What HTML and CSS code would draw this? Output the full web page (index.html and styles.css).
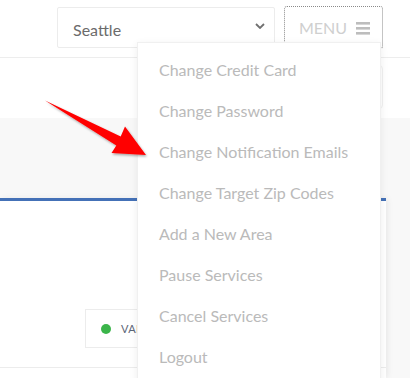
FILE: index.html
```html
<!DOCTYPE html>
<html lang="en">
<head>
<meta charset="utf-8">
<title>Account menu</title>
<link rel="stylesheet" href="styles.css">
</head>
<body>
<header class="topbar">
  <div class="city-select">
    <span class="city-name">Seattle</span>
    <svg class="chevron" width="10" height="6" viewBox="0 0 10 6"><path d="M1 1 L5 5 L9 1" fill="none" stroke="#707070" stroke-width="1.8"/></svg>
  </div>
  <button class="menu-btn">
    <span class="menu-label">MENU</span>
    <svg class="burger" width="14" height="13" viewBox="0 0 14 13"><rect x="0" y="0" width="14" height="2.6" fill="#bdbdbd"/><rect x="0" y="5" width="14" height="2.6" fill="#bdbdbd"/><rect x="0" y="10" width="14" height="2.6" fill="#bdbdbd"/></svg>
  </button>
</header>
<section class="subbar">
  <div class="sub-card"></div>
</section>
<section class="content">
  <div class="band"></div>
  <div class="panel-row">
    <div class="panel">
      <div class="status">
        <span class="dot"></span>
        <span class="status-text">VALID</span>
      </div>
      <div class="row-sep"></div>
    </div>
    <div class="side"></div>
  </div>
</section>

<nav class="dropdown">
  <a class="item">Change Credit Card</a>
  <a class="item">Change Password</a>
  <a class="item">Change Notification Emails</a>
  <a class="item">Change Target Zip Codes</a>
  <a class="item">Add a New Area</a>
  <a class="item">Pause Services</a>
  <a class="item">Cancel Services</a>
  <a class="item">Logout</a>
</nav>

<svg class="arrow" width="160" height="170" viewBox="0 0 160 170">
  <defs>
    <filter id="sh" x="-10%" y="-10%" width="130%" height="130%">
      <feDropShadow dx="1" dy="1.5" stdDeviation="1" flood-color="#000" flood-opacity="0.35"/>
    </filter>
  </defs>
  <polygon points="45,100.5 120.7,136.5 125,126.5 146,155 111.5,153 116.3,145.5" fill="#ff0000" filter="url(#sh)"/>
</svg>
</body>
</html>
```
FILE: styles.css
```css
html, body {
  margin: 0;
  padding: 0;
}
body {
  width: 410px;
  height: 378px;
  overflow: hidden;
  background: #fff;
  font-family: Lato, "Open Sans", sans-serif;
  position: relative;
}
.topbar {
  height: 57px;
  border-bottom: 1px solid #ededed;
  display: flex;
  align-items: flex-start;
  justify-content: flex-end;
  gap: 9px;
  padding-right: 27px;
}
.city-select {
  margin-top: 7px;
  width: 218px;
  height: 41px;
  box-sizing: border-box;
  border: 1px solid #ececec;
  border-radius: 2px;
  display: flex;
  align-items: center;
  padding: 4px 9px 0 15px;
}
.city-name {
  flex: 1;
  font-size: 16px;
  color: #6b6b6b;
}
.chevron {
  margin-top: -7px;
}
.menu-btn {
  margin-top: 6px;
  width: 99px;
  height: 43px;
  box-sizing: border-box;
  border: 1px dotted #8a8a8a;
  border-radius: 3px;
  background: #fff;
  display: flex;
  align-items: center;
  padding: 0 0 0 14px;
  gap: 9px;
  font-family: Lato, "Open Sans", sans-serif;
}
.menu-label {
  font-size: 16px;
  color: #cfcfcf;
}
.burger {
  margin-top: 1px;
}
.subbar {
  height: 60px;
  box-sizing: border-box;
  padding-top: 7px;
  display: flow-root;
}
.sub-card {
  margin: 0 27px 0 auto;
  width: 200px;
  height: 42px;
  border: 1px solid #f0f0f0;
  border-radius: 4px;
}
.content {
  background: #f8f8f8;
  height: 260px;
}
.band {
  height: 80px;
}
.panel-row {
  display: flex;
  height: 180px;
}
.panel {
  width: 386px;
  background: #fff;
  border-top: 3px solid #4471b7;
  box-shadow: 2px 0 6px rgba(0, 0, 0, 0.06);
  display: flex;
  flex-direction: column;
}
.side {
  flex: 1;
}
.status {
  margin: 108px 0 0 85px;
  height: 39px;
  width: 220px;
  box-sizing: border-box;
  border: 1px solid #ececec;
  display: flex;
  align-items: center;
  padding-left: 15px;
  gap: 10px;
}
.dot {
  width: 10px;
  height: 10px;
  border-radius: 50%;
  background: #3bb54a;
}
.status-text {
  font-size: 11px;
  color: #5b6577;
  letter-spacing: 0.3px;
}
.row-sep {
  margin-top: 19px;
  border-top: 1px solid #ececec;
}
.dropdown {
  position: absolute;
  left: 137px;
  top: 42px;
  width: 244px;
  height: 345px;
  box-sizing: border-box;
  background: #fff;
  border: 1px solid #f0f0f0;
  box-shadow: 0 2px 8px rgba(0, 0, 0, 0.07);
  padding: 6px 0 0 21px;
  display: flex;
  flex-direction: column;
}
.item {
  font-size: 16px;
  line-height: 41px;
  color: #bababa;
  white-space: nowrap;
}
.arrow {
  position: absolute;
  left: 0;
  top: 0;
}
```
